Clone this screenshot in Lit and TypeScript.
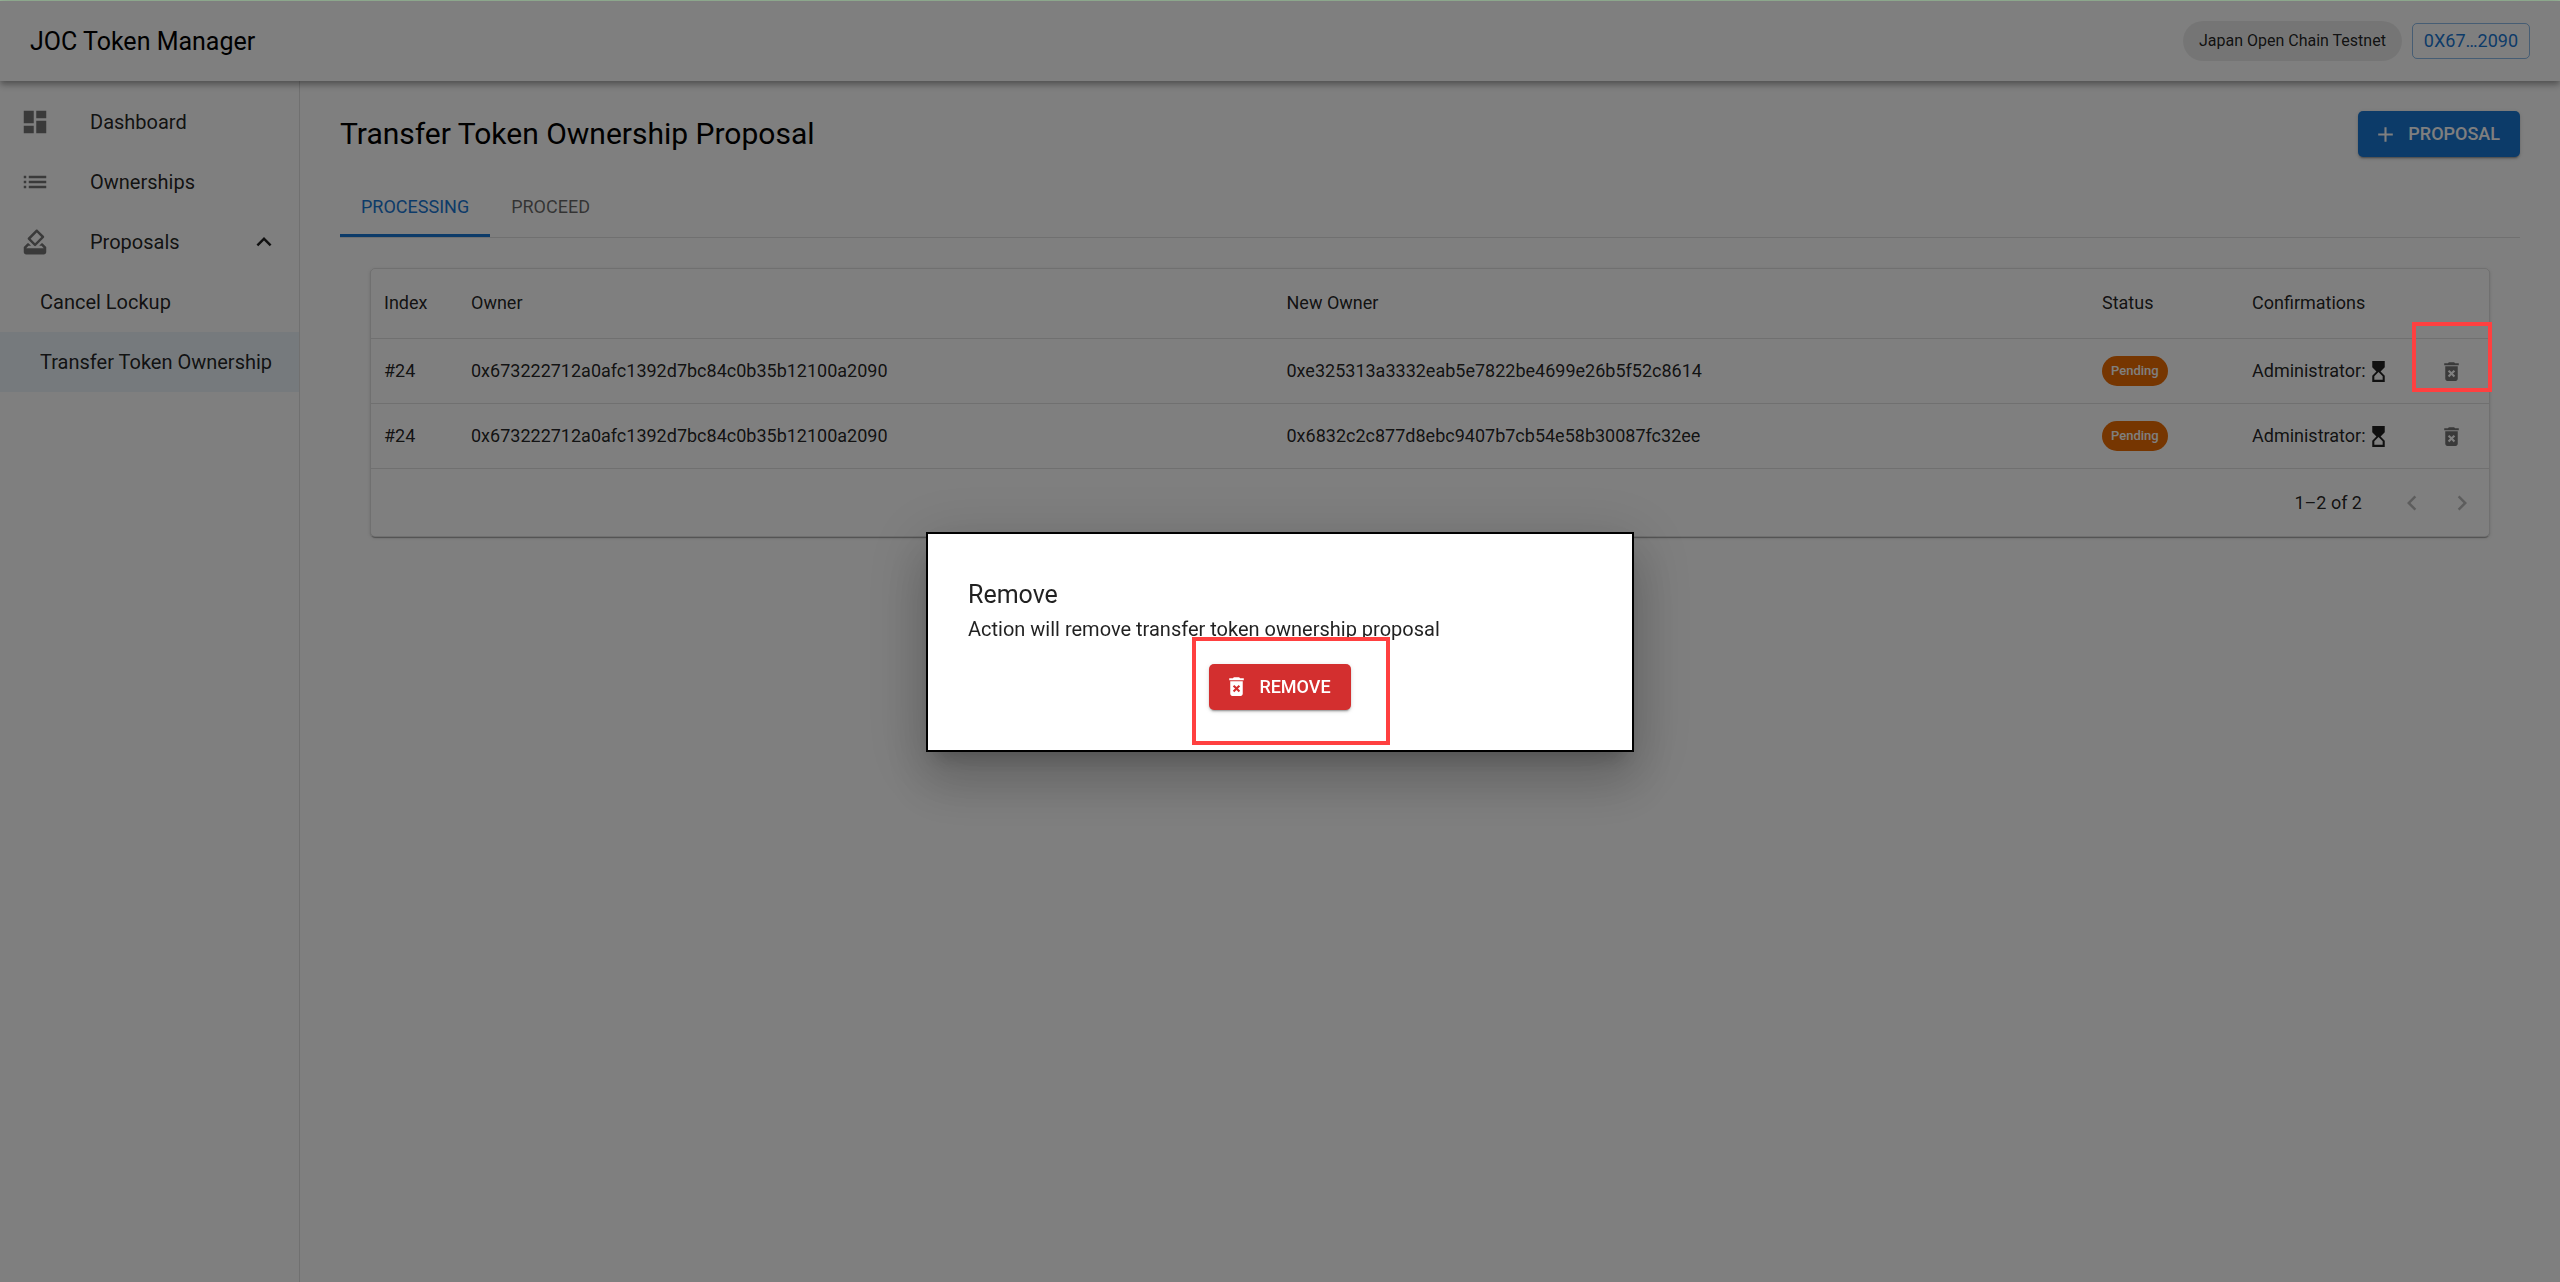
import { LitElement, html, css, svg } from "lit";
import { customElement } from "lit/decorators.js";

const ICONS: Record<string, string> = {
  dashboard: "M3 13h8V3H3v10zm0 8h8v-6H3v6zm10 0h8V11h-8v10zm0-18v6h8V3h-8z",
  list: "M3 13h2v-2H3v2zm0 4h2v-2H3v2zm0-8h2V7H3v2zm4 4h14v-2H7v2zm0 4h14v-2H7v2zM7 7v2h14V7H7z",
  vote: "M18 13h-.68l-2 2h1.91L19 17H5l1.78-2h2.05l-2-2H6l-3 3v4c0 1.1.89 2 1.99 2H19c1.1 0 2-.89 2-2v-4l-3-3zm-1-5.05l-4.95 4.95-3.54-3.54 4.95-4.95L17 7.95zm-4.24-5.66L6.39 8.66c-.39.39-.39 1.02 0 1.41l4.95 4.95c.39.39 1.02.39 1.41 0l6.36-6.36c.39-.39.39-1.02 0-1.41L14.16 2.3c-.38-.4-1.01-.4-1.4-.01z",
  expandLess: "M12 8l-6 6 1.41 1.41L12 10.83l4.59 4.58L18 14z",
  add: "M19 13h-6v6h-2v-6H5v-2h6V5h2v6h6v2z",
  hourglass: "M6 2v6h.01L6 8.01 10 12l-4 4 .01.01H6V22h12v-5.99h-.01L18 16l-4-4 4-3.99-.01-.01H18V2H6zm10 14.5V20H8v-3.5l4-4 4 4z",
  remove: "M6 19c0 1.1.9 2 2 2h8c1.1 0 2-.9 2-2V7H6v12zm2.46-7.12l1.41-1.41L12 12.59l2.12-2.12 1.41 1.41L13.41 14l2.12 2.12-1.41 1.41L12 15.41l-2.12 2.12-1.41-1.41L10.59 14l-2.13-2.12zM15.5 4l-1-1h-5l-1 1H5v2h14V4z",
  left: "M15.41 16.59 10.83 12l4.58-4.59L14 6l-6 6 6 6 1.41-1.41z",
  right: "M8.59 16.59 13.17 12 8.59 7.41 10 6l6 6-6 6-1.41-1.41z",
};

const icon = (name: string, cls = "icon") =>
  html`<svg class=${cls} viewBox="0 0 24 24" aria-hidden="true">${svg`<path d=${ICONS[name]}></path>`}</svg>`;

interface Proposal {
  index: string;
  owner: string;
  newOwner: string;
  status: string;
  confirmer: string;
}

const PROPOSALS: Proposal[] = [
  {
    index: "#24",
    owner: "0x673222712a0afc1392d7bc84c0b35b12100a2090",
    newOwner: "0xe325313a3332eab5e7822be4699e26b5f52c8614",
    status: "Pending",
    confirmer: "Administrator:",
  },
  {
    index: "#24",
    owner: "0x673222712a0afc1392d7bc84c0b35b12100a2090",
    newOwner: "0x6832c2c877d8ebc9407b7cb54e58b30087fc32ee",
    status: "Pending",
    confirmer: "Administrator:",
  },
];

@customElement("app-root")
export class AppRoot extends LitElement {
  static styles = css`
    :host {
      display: flex;
      flex-direction: column;
      min-height: 100vh;
      box-sizing: border-box;
      border-top: 1px solid #97b397;
      background: #fff;
      color: rgba(0, 0, 0, 0.87);
      font-family: Roboto, "Liberation Sans", sans-serif;
      font-size: 20px;
      line-height: 30px;
    }
    * {
      box-sizing: border-box;
    }
    h1, h2, p, ul {
      margin: 0;
      padding: 0;
      font-weight: 400;
    }
    ul {
      list-style: none;
    }
    button {
      font: inherit;
      color: inherit;
      background: none;
      border: 0;
      padding: 0;
      cursor: pointer;
    }
    a {
      color: inherit;
      text-decoration: none;
    }
    .icon {
      width: 30px;
      height: 30px;
      fill: currentColor;
      flex: none;
      display: block;
    }
    .small {
      width: 25px;
      height: 25px;
    }
    .header {
      display: flex;
      align-items: center;
      gap: 10px;
      height: 80px;
      padding: 0 30px;
      background: #fff;
      position: relative;
      box-shadow: 0 3px 5px -1px rgba(0, 0, 0, 0.2), 0 5px 6px rgba(0, 0, 0, 0.14),
        0 1px 12px rgba(0, 0, 0, 0.12);
    }
    .header .brand {
      flex: 1;
      padding-top: 2px;
      font-size: 25px;
      line-height: 40px;
      color: #000;
    }
    .network {
      padding: 0 16px;
      border-radius: 20px;
      background: rgba(0, 0, 0, 0.08);
      font-size: 16px;
      line-height: 40px;
    }
    .account {
      height: 36px;
      padding: 0 11px;
      border: 1px solid rgba(25, 118, 210, 0.5);
      border-radius: 5px;
      color: #1976d2;
      font-size: 18px;
      line-height: 32px;
    }
    .body {
      display: flex;
      flex: 1;
    }
    .sidebar {
      flex: none;
      width: 300px;
      padding-top: 11px;
      border-right: 1px solid rgba(0, 0, 0, 0.12);
    }
    .item {
      display: flex;
      align-items: center;
      width: 100%;
      height: 60px;
      padding: 0 20px;
      text-align: left;
    }
    .item .lead {
      width: 70px;
      color: rgba(0, 0, 0, 0.54);
    }
    .item .label {
      flex: 1;
      white-space: nowrap;
    }
    .sub {
      padding-left: 40px;
    }
    .selected {
      background: rgba(25, 118, 210, 0.08);
    }
    .main {
      flex: 1;
      min-width: 0;
      padding: 30px 40px;
    }
    .heading {
      display: flex;
      align-items: center;
      justify-content: space-between;
      margin-bottom: 20px;
    }
    .title {
      font-size: 30px;
      line-height: 40px;
      color: #000;
    }
    .action {
      display: flex;
      align-items: center;
      gap: 10px;
      height: 46px;
      padding: 0 20px 0 15px;
      border-radius: 5px;
      color: #fff;
      font-size: 18px;
      font-weight: 500;
      box-shadow: 0 3px 1px -2px rgba(0, 0, 0, 0.2), 0 2px 2px rgba(0, 0, 0, 0.14),
        0 1px 5px rgba(0, 0, 0, 0.12);
    }
    .primary {
      background: #1976d2;
    }
    .danger {
      background: #d32f2f;
    }
    .tabs {
      display: flex;
      border-bottom: 1px solid rgba(0, 0, 0, 0.12);
    }
    .tab {
      height: 60px;
      padding: 2px 21px 0;
      border-bottom: 3px solid transparent;
      color: rgba(0, 0, 0, 0.6);
      font-size: 18px;
    }
    .tab.active {
      border-color: #1976d2;
      color: #1976d2;
    }
    .card {
      margin: 30px 30px 0;
      border: 1px solid rgba(0, 0, 0, 0.12);
      border-radius: 5px;
      box-shadow: 0 3px 1px -2px rgba(0, 0, 0, 0.2), 0 1px 1px rgba(0, 0, 0, 0.14),
        0 1px 4px rgba(0, 0, 0, 0.12);
      font-size: 18px;
    }
    .grid {
      width: 100%;
      table-layout: fixed;
      border-collapse: separate;
      border-spacing: 0;
    }
    .grid th, .grid td {
      height: 65px;
      padding: 0 13px;
      border-bottom: 1px solid rgba(0, 0, 0, 0.12);
      font-weight: 400;
      text-align: left;
      white-space: nowrap;
    }
    .grid th {
      height: 70px;
      padding-bottom: 2px;
    }
    .c-index { width: 87px; }
    .c-status { width: 150px; }
    .c-confirm { width: 175px; }
    .c-action { width: 75px; }
    .badge {
      display: block;
      width: fit-content;
      padding: 0 9px;
      border-radius: 15px;
      background: #ed6c02;
      color: #fff;
      font-size: 13px;
      font-weight: 500;
    }
    .confirm {
      display: flex;
      align-items: center;
    }
    .trash {
      display: block;
      margin: auto;
      color: rgba(0, 0, 0, 0.54);
    }
    .pager {
      display: flex;
      align-items: center;
      justify-content: flex-end;
      height: 67px;
      padding-right: 2px;
    }
    .range {
      margin-right: 25px;
    }
    .step {
      padding: 10px;
      opacity: 0.3;
    }
    .backdrop {
      position: fixed;
      inset: 1px 0 0;
      display: flex;
      align-items: center;
      justify-content: center;
      background: rgba(0, 0, 0, 0.5);
    }
    .dialog {
      width: 708px;
      max-width: 100%;
      padding: 40px;
      border: 2px solid #000;
      background: #fff;
      box-shadow: 0 14px 19px -9px rgba(0, 0, 0, 0.2), 0 30px 48px 4px rgba(0, 0, 0, 0.14),
        0 11px 58px 10px rgba(0, 0, 0, 0.12);
    }
    .dialog .dialog-title {
      padding-top: 2px;
      font-size: 25px;
      line-height: 38px;
    }
    .dialog-actions {
      display: flex;
      justify-content: center;
      margin-top: 20px;
    }
    .target {
      position: relative;
    }
    .mark {
      position: absolute;
      border: 4px solid #ff4040;
      pointer-events: none;
    }
    .mark-dialog {
      inset: -27px -39px -35px -17px;
    }
    .mark-row {
      top: 321px;
      right: 68px;
      width: 80px;
      height: 70px;
    }
  `;

  private renderRow(p: Proposal) {
    return html`<tr>
      <td>${p.index}</td>
      <td>${p.owner}</td>
      <td>${p.newOwner}</td>
      <td><span class="badge">${p.status}</span></td>
      <td><div class="confirm">${p.confirmer}${icon("hourglass", "icon small")}</div></td>
      <td><button class="trash" aria-label="Remove proposal">${icon("remove", "icon small")}</button></td>
    </tr>`;
  }

  render() {
    return html`
      <header class="header">
        <h1 class="brand">JOC Token Manager</h1>
        <span class="network">Japan Open Chain Testnet</span>
        <button class="account">0X67…2090</button>
      </header>
      <div class="body">
        <nav class="sidebar">
          <ul>
            <li><a class="item" href="#dashboard"><span class="lead">${icon("dashboard")}</span><span class="label">Dashboard</span></a></li>
            <li><a class="item" href="#ownerships"><span class="lead">${icon("list")}</span><span class="label">Ownerships</span></a></li>
            <li><button class="item" aria-expanded="true"><span class="lead">${icon("vote")}</span><span class="label">Proposals</span>${icon("expandLess")}</button></li>
            <li><a class="item sub" href="#cancel-lockup"><span class="label">Cancel Lockup</span></a></li>
            <li><a class="item sub selected" href="#transfer" aria-current="page"><span class="label">Transfer Token Ownership</span></a></li>
          </ul>
        </nav>
        <main class="main">
          <div class="heading">
            <h2 class="title">Transfer Token Ownership Proposal</h2>
            <button class="action primary">${icon("add", "icon small")}PROPOSAL</button>
          </div>
          <div class="tabs" role="tablist">
            <button class="tab active" role="tab" aria-selected="true">PROCESSING</button>
            <button class="tab" role="tab" aria-selected="false">PROCEED</button>
          </div>
          <section class="card">
            <table class="grid">
              <thead>
                <tr>
                  <th class="c-index">Index</th>
                  <th>Owner</th>
                  <th>New Owner</th>
                  <th class="c-status">Status</th>
                  <th class="c-confirm">Confirmations</th>
                  <th class="c-action"></th>
                </tr>
              </thead>
              <tbody>${PROPOSALS.map((p) => this.renderRow(p))}</tbody>
            </table>
            <div class="pager">
              <span class="range">1–2 of 2</span>
              <button class="step" aria-label="Previous page" disabled>${icon("left")}</button>
              <button class="step" aria-label="Next page" disabled>${icon("right")}</button>
            </div>
          </section>
        </main>
      </div>
      <div class="backdrop">
        <div class="dialog" role="dialog" aria-modal="true" aria-labelledby="dialog-title">
          <h2 class="dialog-title" id="dialog-title">Remove</h2>
          <p>Action will remove transfer token ownership proposal</p>
          <div class="dialog-actions">
            <div class="target">
              <button class="action danger">${icon("remove", "icon small")}REMOVE</button>
              <div class="mark mark-dialog"></div>
            </div>
          </div>
        </div>
        <div class="mark mark-row"></div>
      </div>
    `;
  }
}
